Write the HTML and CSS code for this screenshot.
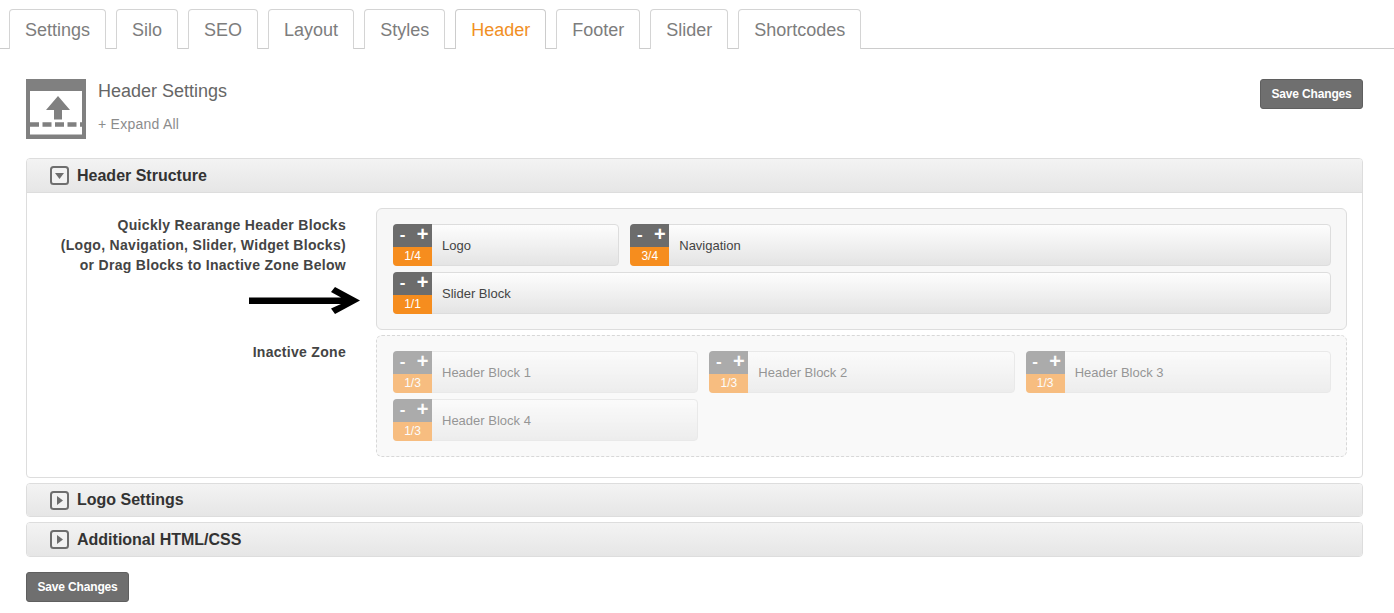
FILE: index.html
```html
<!DOCTYPE html>
<html lang="en">
<head>
<meta charset="utf-8">
<title>Header Settings</title>
<link rel="stylesheet" href="styles.css">
</head>
<body>
<nav class="tabs">
  <a class="tab">Settings</a>
  <a class="tab">Silo</a>
  <a class="tab">SEO</a>
  <a class="tab">Layout</a>
  <a class="tab">Styles</a>
  <a class="tab tab-active">Header</a>
  <a class="tab">Footer</a>
  <a class="tab">Slider</a>
  <a class="tab">Shortcodes</a>
</nav>
<main class="content">
  <header class="page-head">
    <svg class="page-icon" width="60" height="60" viewBox="0 0 60 60">
      <rect width="60" height="60" fill="#808080"/>
      <rect x="4" y="12" width="52" height="43.500" fill="#fff"/>
      <path d="M32 17 L44 31 L36 31 L36 40.500 L28 40.500 L28 31 L20 31 Z" fill="#808080"/>
      <path d="M4 45.500 H56" stroke="#808080" stroke-width="4.500" stroke-dasharray="9 3.500" fill="none"/>
    </svg>
    <div class="page-titles">
      <h1 class="page-title">Header Settings</h1>
      <a class="expand">+ Expand All</a>
    </div>
    <button class="save save-top">Save Changes</button>
  </header>

  <section class="panel">
    <div class="panel-head">
      <svg class="toggle" width="19" height="19" viewBox="0 0 19 19"><rect x="1" y="1" width="17" height="17" rx="2.500" fill="#f2f2f2" stroke="#6e6e6e" stroke-width="2"/><path d="M5 7 H14 L9.500 13 Z" fill="#6e6e6e"/></svg>
      <h2 class="panel-title">Header Structure</h2>
    </div>
    <div class="panel-body">
      <div class="label label-active">
        <p class="label-text">Quickly Rearange Header Blocks<br>(Logo, Navigation, Slider, Widget Blocks)<br>or Drag Blocks to Inactive Zone Below</p>
        <svg class="arrow" width="111" height="28" viewBox="0 0 111 28"><path d="M0 10.500 H92 L82 5 L86 0 L111 13.500 L86 27 L82 21.500 L92 17 H0 Z" fill="#000"/></svg>
      </div>
      <div class="zone">
        <div class="block span-3"><div class="handle"><div class="ctrl"><span class="minus">-</span><span class="plus">+</span></div><div class="size">1/4</div></div><span class="name">Logo</span></div>
        <div class="block span-9"><div class="handle"><div class="ctrl"><span class="minus">-</span><span class="plus">+</span></div><div class="size">3/4</div></div><span class="name">Navigation</span></div>
        <div class="block span-12"><div class="handle"><div class="ctrl"><span class="minus">-</span><span class="plus">+</span></div><div class="size">1/1</div></div><span class="name">Slider Block</span></div>
      </div>
      <div class="label label-inactive"><p class="label-text">Inactive Zone</p></div>
      <div class="zone zone-inactive">
        <div class="block span-4"><div class="handle"><div class="ctrl"><span class="minus">-</span><span class="plus">+</span></div><div class="size">1/3</div></div><span class="name">Header Block 1</span></div>
        <div class="block span-4"><div class="handle"><div class="ctrl"><span class="minus">-</span><span class="plus">+</span></div><div class="size">1/3</div></div><span class="name">Header Block 2</span></div>
        <div class="block span-4"><div class="handle"><div class="ctrl"><span class="minus">-</span><span class="plus">+</span></div><div class="size">1/3</div></div><span class="name">Header Block 3</span></div>
        <div class="block span-4"><div class="handle"><div class="ctrl"><span class="minus">-</span><span class="plus">+</span></div><div class="size">1/3</div></div><span class="name">Header Block 4</span></div>
      </div>
    </div>
  </section>

  <section class="panel panel-closed">
    <div class="panel-head">
      <svg class="toggle" width="19" height="19" viewBox="0 0 19 19"><rect x="1" y="1" width="17" height="17" rx="2.500" fill="#f2f2f2" stroke="#6e6e6e" stroke-width="2"/><path d="M7 5 L13 9.500 L7 14 Z" fill="#6e6e6e"/></svg>
      <h2 class="panel-title">Logo Settings</h2>
    </div>
  </section>
  <section class="panel panel-closed">
    <div class="panel-head">
      <svg class="toggle" width="19" height="19" viewBox="0 0 19 19"><rect x="1" y="1" width="17" height="17" rx="2.500" fill="#f2f2f2" stroke="#6e6e6e" stroke-width="2"/><path d="M7 5 L13 9.500 L7 14 Z" fill="#6e6e6e"/></svg>
      <h2 class="panel-title">Additional HTML/CSS</h2>
    </div>
  </section>
  <button class="save save-bottom">Save Changes</button>
</main>
</body>
</html>
```
FILE: styles.css
```css
* { box-sizing: border-box; }
html, body { margin: 0; padding: 0; background: #fff; }
body { font-family: "Liberation Sans", Arial, sans-serif; color: #333; height: 613px; overflow: hidden; }

.tabs { display: flex; gap: 10px; height: 49px; padding: 9px 0 0 9px; border-bottom: 1px solid #ccc; }
.tab { height: 40px; padding: 0 15px; border: 1px solid #d4d4d4; border-bottom: 0; border-radius: 4px 4px 0 0; font-size: 18px; line-height: 40px; color: #7d7d7d; background: #fff; }
.tab-active { color: #f18f24; border-color: #ccc; }

.content { padding: 30px 31px 0 26px; }
.page-head { display: flex; align-items: flex-start; height: 60px; margin-bottom: 19px; }
.page-icon { display: block; flex: none; }
.page-titles { margin-left: 12px; flex: 1; }
.page-title { margin: 0; font-size: 18px; font-weight: 400; line-height: 24px; color: #666; }
.expand { display: block; margin-top: 11px; font-size: 14px; line-height: 20px; color: #8c8c8c; letter-spacing: .25px; }

.save { display: block; width: 103px; height: 30px; padding: 0; background: #6f6f6f; border: 1px solid #5f5f5f; border-radius: 3px; color: #fff; font-family: "Liberation Sans", Arial, sans-serif; font-size: 12px; font-weight: 700; letter-spacing: -.15px; text-align: center; }
.save-bottom { margin-top: 15px; }

.panel { border: 1px solid #ddd; border-radius: 4px; background: #fff; }
.panel-closed { margin-top: 5px; }
.panel-head { display: flex; align-items: center; gap: 8px; height: 34px; padding-left: 23px; background: linear-gradient(#f3f3f3, #e6e6e6); border-radius: 3px 3px 0 0; border-bottom: 1px solid #ddd; }
.panel-closed .panel-head { border-bottom: 0; height: 32px; border-radius: 3px; }
.panel-closed + .panel-closed .panel-head { height: 33px; }
.toggle { display: block; flex: none; }
.panel-title { margin: 0; font-size: 16px; font-weight: 700; color: #333; }

.panel-body { display: grid; grid-template-columns: 319px 971px; column-gap: 30px; row-gap: 5px; padding: 15px 15px 20px 0; }
.label { text-align: right; }
.label-text { margin: 0; font-size: 14px; font-weight: 700; line-height: 20px; color: #444; letter-spacing: .3px; }
.label-active { display: flex; flex-direction: column; align-items: flex-end; padding-top: 7px; }
.label-inactive { padding-top: 7px; }
.arrow { display: block; margin: 12px -14px 0 0; }

.zone { display: grid; grid-template-columns: repeat(12, 1fr); column-gap: 11px; row-gap: 6px; align-content: start; height: 122px; padding: 15px 15px 15px 16px; background: #f7f7f7; border: 1px solid #ddd; border-radius: 6px; }
.zone-inactive { background: #f9f9f9; border: 1px dashed #d8d8d8; }
.zone-inactive .block { opacity: .55; }

.span-3 { grid-column: span 3; }
.span-4 { grid-column: span 4; }
.span-9 { grid-column: span 9; }
.span-12 { grid-column: span 12; }

.block { display: flex; align-items: center; height: 42px; background: linear-gradient(#fdfdfd, #e4e4e4); border: 1px solid #ddd; border-radius: 4px; }
.handle { flex: none; width: 39px; height: 42px; margin: -1px 0 -1px -1px; border-radius: 4px 0 0 4px; overflow: hidden; }
.ctrl { display: flex; height: 23px; background: #6c6c6c; color: #fff; font-weight: 700; }
.minus { width: 19px; text-align: center; font-size: 17px; line-height: 22px; }
.plus { width: 20px; padding-left: 1px; text-align: center; font-size: 20px; line-height: 20px; }
.size { height: 19px; background: #f68d1e; color: #fff; font-size: 12px; line-height: 18px; text-align: center; }
.name { margin-left: 10px; padding-top: 1px; font-size: 13px; color: #444; }
```
